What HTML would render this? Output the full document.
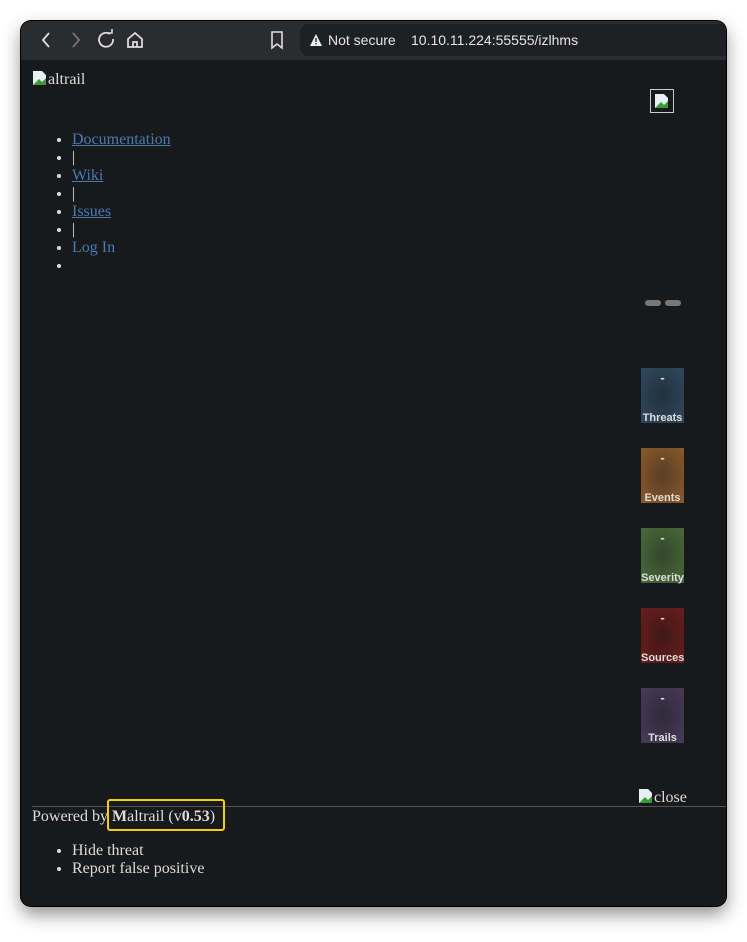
<!DOCTYPE html>
<html><head><style>
html,body{margin:0;padding:0;width:747px;height:942px;background:#fff;overflow:hidden;font-family:"Liberation Serif",serif;}
.win{position:absolute;left:21px;top:21px;width:705px;height:885px;border-radius:10px;background:#18191b;box-shadow:0 0 0 1px #000,0 8px 18px rgba(0,0,0,.45);overflow:hidden}
.bar{position:absolute;left:0;top:0;width:100%;height:39px;background:#2b2c30;}
.url{position:absolute;left:279px;top:3px;right:0;height:32px;background:#1f2023;border-radius:8px 0 0 8px;color:#e6e6e6;font:14px "Liberation Sans",sans-serif;}
.t{position:absolute;color:#ddd;font-size:16px;}
ul{margin:0;padding:0 0 0 40px;position:absolute;color:#ddd;font-size:16px;line-height:18px}
a{color:#4a7ab5}
.tile{position:absolute;left:620px;width:43px;height:55px;font:bold 11px "Liberation Sans",sans-serif;color:#ddd;text-align:center}
.tile .d{position:absolute;top:2px;width:100%;font-size:13px}
.tile .l{position:absolute;bottom:-1px;width:100%}
.bi{display:inline-block;width:16px;height:16px;vertical-align:-2px}
</style></head><body>
<div class="win">
<div class="bar">
<svg width="140" height="40" style="position:absolute;left:0;top:-1px" fill="none" stroke="#ddd" stroke-width="1.8">
<path d="M28 13l-6 7 6 7"/><path d="M52 13l6 7-6 7" stroke="#777"/>
<path d="M89 14a7 7 0 1 0 3 5"/><path d="M86 13h5v-4" stroke-width="1.6"/>
<path d="M107 19l7-6 7 6v8h-14z"/><path d="M112 27v-5h4v5"/>
</svg>
<svg width="16" height="20" style="position:absolute;left:248px;top:9px" fill="none" stroke="#ddd" stroke-width="1.6"><path d="M3 2h10v16l-5-4-5 4z"/></svg>
<div class="url"><svg width="14" height="14" style="position:absolute;left:9px;top:9px"><path d="M7 1L13 13H1z" fill="#eee"/><rect x="6.3" y="5" width="1.4" height="4" fill="#222"/><rect x="6.3" y="10" width="1.4" height="1.4" fill="#222"/></svg><span style="position:absolute;left:28px;top:8px">Not secure</span><span style="position:absolute;left:111px;top:8px">10.10.11.224:55555/izlhms</span></div>
</div>
<div class="t" style="left:11px;top:49px"><svg class="bi" viewBox="0 0 16 16"><path d="M1 1h9l4 4v10H1z" fill="#e8eef5"/><path d="M1 15l6-6 3 3 4-4v7z" fill="#3a9a3a"/></svg>altrail</div>
<div style="position:absolute;left:629px;top:68px;width:24px;height:24px;border:1px solid #ccc;box-sizing:border-box"><svg width="16" height="16" style="position:absolute;left:3px;top:3px" viewBox="0 0 16 16"><path d="M1 1h9l4 4v10H1z" fill="#e8eef5"/><path d="M1 15l6-6 3 3 4-4v7z" fill="#3a9a3a"/></svg></div>
<ul style="left:11px;top:110px">
<li><a href="#">Documentation</a></li><li>|</li><li><a href="#">Wiki</a></li><li>|</li><li><a href="#">Issues</a></li><li>|</li><li><a href="#" style="text-decoration:none">Log In</a></li><li>&nbsp;</li>
</ul>
<div style="position:absolute;left:624px;top:279px;width:16px;height:6px;border-radius:3px;background:#777"></div>
<div style="position:absolute;left:644px;top:279px;width:16px;height:6px;border-radius:3px;background:#777"></div>
<div class="tile" style="top:347px;background:radial-gradient(#23303d,#2f4a62)"><div class="d">-</div><div class="l">Threats</div></div>
<div class="tile" style="top:427px;background:radial-gradient(#5a3e25,#8a5a2c)"><div class="d">-</div><div class="l">Events</div></div>
<div class="tile" style="top:507px;background:radial-gradient(#34472c,#4a6a3a)"><div class="d">-</div><div class="l">Severity</div></div>
<div class="tile" style="top:587px;background:radial-gradient(#401818,#6a1e1e)"><div class="d">-</div><div class="l">Sources</div></div>
<div class="tile" style="top:667px;background:radial-gradient(#302a3a,#4a3a5a)"><div class="d">-</div><div class="l">Trails</div></div>
<div class="t" style="left:617px;top:767px"><svg class="bi" viewBox="0 0 16 16"><path d="M1 1h9l4 4v10H1z" fill="#e8eef5"/><path d="M1 15l6-6 3 3 4-4v7z" fill="#3a9a3a"/></svg>close</div>
<div style="position:absolute;left:11px;top:785px;right:0;height:1px;background:#555"></div>
<div class="t" style="left:11px;top:787px">Powered by <b>M</b>altrail (v<b>0.53</b>)</div>
<div style="position:absolute;left:86px;top:778px;width:118px;height:32px;border:2px solid #f3cd1a;border-radius:3px;box-sizing:border-box"></div>
<ul style="left:11px;top:821px"><li>Hide threat</li><li>Report false positive</li></ul>
</div>
</body></html>
